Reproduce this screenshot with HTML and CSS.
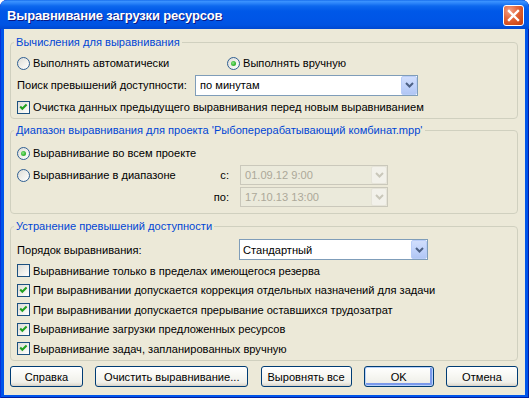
FILE: index.html
```html
<!DOCTYPE html>
<html lang="ru">
<head>
<meta charset="utf-8">
<title>Выравнивание загрузки ресурсов</title>
<link rel="stylesheet" href="styles.css">
</head>
<body>
<div class="window">
  <div class="titlebar">
    <span class="title">Выравнивание загрузки ресурсов</span>
    <span class="close"><svg width="19" height="19" viewBox="0 0 19 19"><path d="M5 5 L14 14 M14 5 L5 14" stroke="#fff" stroke-width="2.4" stroke-linecap="square"/></svg></span>
  </div>
  <div class="client">
    <fieldset class="group g1">
      <legend>Вычисления для выравнивания</legend>
      <div class="row two">
        <span class="opt"><span class="radio"></span>Выполнять автоматически</span>
        <span class="opt"><span class="radio on"></span>Выполнять вручную</span>
      </div>
      <div class="row">
        <span class="lbl l-search">Поиск превышений доступности:</span>
        <span class="combo c-search"><span class="val">по минутам</span><span class="drop"><svg width="9" height="6" viewBox="0 0 9 6"><path d="M1 1 L4.5 4.5 L8 1" fill="none" stroke="#4D6185" stroke-width="2"/></svg></span></span>
      </div>
      <div class="row">
        <span class="opt"><span class="chk"><svg width="11" height="11" viewBox="0 0 11 11"><path d="M2.2 4.6 L4.3 6.7 L8.6 2.4" fill="none" stroke="#21A121" stroke-width="2.1"/></svg></span>Очистка данных предыдущего выравнивания перед новым выравниванием</span>
      </div>
    </fieldset>

    <fieldset class="group g2">
      <legend>Диапазон выравнивания для проекта 'Рыбоперерабатывающий комбинат.mpp'</legend>
      <div class="row">
        <span class="opt"><span class="radio on"></span>Выравнивание во всем проекте</span>
      </div>
      <div class="row">
        <span class="opt o-range"><span class="radio"></span>Выравнивание в диапазоне</span>
        <span class="lbl l-date">с:</span>
        <span class="combo disabled c-date"><span class="val">01.09.12 9:00</span><span class="drop"><svg width="9" height="6" viewBox="0 0 9 6"><path d="M1 1 L4.5 4.5 L8 1" fill="none" stroke="#C9C7BA" stroke-width="2"/></svg></span></span>
      </div>
      <div class="row">
        <span class="spacer o-range"></span>
        <span class="lbl l-date">по:</span>
        <span class="combo disabled c-date"><span class="val">17.10.13 13:00</span><span class="drop"><svg width="9" height="6" viewBox="0 0 9 6"><path d="M1 1 L4.5 4.5 L8 1" fill="none" stroke="#C9C7BA" stroke-width="2"/></svg></span></span>
      </div>
    </fieldset>

    <fieldset class="group g3">
      <legend>Устранение превышений доступности</legend>
      <div class="row r-order">
        <span class="lbl l-order">Порядок выравнивания:</span>
        <span class="combo c-order"><span class="val">Стандартный</span><span class="drop"><svg width="9" height="6" viewBox="0 0 9 6"><path d="M1 1 L4.5 4.5 L8 1" fill="none" stroke="#4D6185" stroke-width="2"/></svg></span></span>
      </div>
      <div class="row r-chk">
        <span class="opt"><span class="chk"></span>Выравнивание только в пределах имеющегося резерва</span>
      </div>
      <div class="row r-chk">
        <span class="opt"><span class="chk"><svg width="11" height="11" viewBox="0 0 11 11"><path d="M2.2 4.6 L4.3 6.7 L8.6 2.4" fill="none" stroke="#21A121" stroke-width="2.1"/></svg></span>При выравнивании допускается коррекция отдельных назначений для задачи</span>
      </div>
      <div class="row r-chk">
        <span class="opt"><span class="chk"><svg width="11" height="11" viewBox="0 0 11 11"><path d="M2.2 4.6 L4.3 6.7 L8.6 2.4" fill="none" stroke="#21A121" stroke-width="2.1"/></svg></span>При выравнивании допускается прерывание оставшихся трудозатрат</span>
      </div>
      <div class="row r-chk">
        <span class="opt"><span class="chk"><svg width="11" height="11" viewBox="0 0 11 11"><path d="M2.2 4.6 L4.3 6.7 L8.6 2.4" fill="none" stroke="#21A121" stroke-width="2.1"/></svg></span>Выравнивание загрузки предложенных ресурсов</span>
      </div>
      <div class="row r-chk">
        <span class="opt"><span class="chk"><svg width="11" height="11" viewBox="0 0 11 11"><path d="M2.2 4.6 L4.3 6.7 L8.6 2.4" fill="none" stroke="#21A121" stroke-width="2.1"/></svg></span>Выравнивание задач, запланированных вручную</span>
      </div>
    </fieldset>

    <div class="buttons">
      <span class="btn b-help">Справка</span>
      <span class="btn b-clear">Очистить выравнивание...</span>
      <span class="btn b-all">Выровнять все</span>
      <span class="btn b-ok default">OK</span>
      <span class="btn b-cancel">Отмена</span>
    </div>
  </div>
</div>
</body>
</html>
```

FILE: styles.css
```css
* { box-sizing: border-box; }
html, body { margin: 0; padding: 0; background: #ffffff; }
body {
  font-family: "Liberation Sans", Arial, sans-serif;
  font-size: 11.1px;
  color: #000;
}
.window {
  width: 529px;
  height: 398px;
  display: flex;
  flex-direction: column;
  padding: 0 4px 3px 4px;
  background: #0055EA;
  border-radius: 7px 7px 0 0;
  overflow: hidden;
  box-shadow: inset 1px 0 0 #0831D9, inset -1px 0 0 #001EA0, inset 0 -1px 0 #001EA0;
}
.titlebar {
  height: 29px;
  flex: 0 0 29px;
  margin: 0 -4px;
  padding: 0 5px 0 7px;
  display: flex;
  align-items: center;
  justify-content: space-between;
  background: linear-gradient(to bottom, #0A5FE6 0, #3D95FF 1px, #2D86FA 3px, #0D68EE 6px, #0058E8 11px, #0055E6 20px, #0053E2 25px, #0048D0 29px);
  border-radius: 7px 7px 0 0;
}
.title {
  color: #ffffff;
  font-family: "Liberation Sans", Arial, sans-serif;
  font-weight: bold;
  font-size: 13px;
  letter-spacing: -0.15px;
  text-shadow: 1px 1px 0 #0A1883;
  padding-top: 2px;
}
.close {
  width: 21px;
  height: 21px;
  margin-top: 2px;
  border: 1px solid #ffffff;
  border-radius: 3px;
  display: flex;
  align-items: center;
  justify-content: center;
  background: radial-gradient(circle at 30% 25%, #F4A187 0%, #E4683E 40%, #D4501F 70%, #C13B10 100%);
}
.client {
  flex: 1;
  background: #ECE9D8;
  padding: 0 7px 0 6px;
  display: flex;
  flex-direction: column;
}
.group {
  margin: 0;
  border: 1px solid #D0D0BF;
  border-radius: 4px;
  padding: 0 6px;
  min-width: 0;
}
.group legend {
  color: #0046D5;
  line-height: 13px;
  padding: 0 2px;
  margin-left: -3px;
}
.g1 { margin-top: 7px; padding-top: 3px; padding-bottom: 0; }
.g2 { margin-top: 5px; padding-top: 5px; padding-bottom: 5px; }
.g3 { margin-top: 6px; padding-top: 5px; padding-bottom: 1.5px; }
.row {
  height: 22px;
  display: flex;
  align-items: center;
}
.row.two {
  display: grid;
  grid-template-columns: 210px auto;
  align-items: center;
}
.r-order { height: 23px; }
.r-chk { height: 19.5px; }
.opt {
  display: flex;
  align-items: center;
  white-space: nowrap;
}
.radio, .chk {
  width: 13px;
  height: 13px;
  flex: 0 0 13px;
  margin-right: 3px;
  border: 1px solid #1C5180;
  background: linear-gradient(135deg, #DCDCD7 0%, #F2F2EE 60%, #FFFFFF 100%);
  display: flex;
  align-items: center;
  justify-content: center;
}
.radio { border-radius: 50%; border-color: #2F5F92; }
.radio.on::after {
  content: "";
  width: 5px;
  height: 5px;
  border-radius: 50%;
  background: radial-gradient(circle at 40% 40%, #8CEB88 0%, #3DBA3A 50%, #21A121 100%);
}
.chk svg { display: block; }
.lbl { white-space: nowrap; }
.l-search { width: 178px; }
.l-order { width: 222px; }
.o-range { width: 193px; flex: 0 0 193px; }
.l-date { width: 19px; text-align: right; margin-right: 11px; }
.combo {
  display: flex;
  align-items: stretch;
  border: 1px solid #7F9DB9;
  background: #ffffff;
  height: 21px;
}
.combo .val {
  flex: 1;
  display: flex;
  align-items: center;
  padding-left: 4px;
  white-space: nowrap;
}
.combo .drop {
  width: 16px;
  flex: 0 0 16px;
  border: 1px solid #B9CDF8;
  border-radius: 2px;
  background: linear-gradient(to bottom, #D1DEFC 0%, #C1D3FB 50%, #B1C6F4 100%);
  display: flex;
  align-items: center;
  justify-content: center;
}
.c-search { width: 223px; }
.c-order { width: 189px; }
.c-order .val { padding-left: 3px; }
.c-date { width: 148px; height: 20px; }
.combo.disabled {
  border-color: #CAC8BB;
  background: #EBEADB;
  color: #ACA899;
}
.combo.disabled .drop {
  background: #F2F1EA;
  border-color: #E6E4D9;
}
.buttons {
  margin-top: 5px;
  display: flex;
  justify-content: space-between;
}
.btn {
  height: 21px;
  display: flex;
  align-items: center;
  justify-content: center;
  border: 1px solid #003C74;
  border-radius: 3px;
  background: linear-gradient(to bottom, #FFFFFF 0%, #F8F8F4 40%, #F0F0EA 80%, #E3E0D7 92%, #D6D0C5 100%);
  white-space: nowrap;
}
.btn.default {
  box-shadow: inset 0 0 0 1px #B8D2FA, inset -1px -1px 0 2px #7C9AEB;
}
.b-help { width: 73px; }
.b-clear { width: 153px; }
.b-all { width: 91px; }
.b-ok { width: 70px; }
.b-cancel { width: 72px; }
```
